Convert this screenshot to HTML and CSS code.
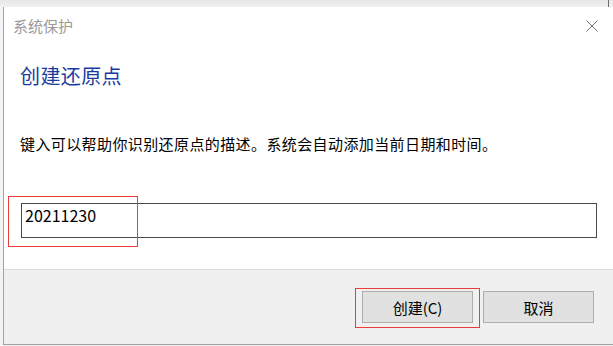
FILE: index.html
```html
<!DOCTYPE html>
<html lang="zh-CN">
<head>
<meta charset="utf-8">
<title>系统保护</title>
<link rel="stylesheet" href="styles.css">
</head>
<body>
<div class="screen">
  <div class="backdrop-strip"><div class="backdrop-edge"></div></div>
  <div class="dialog">
    <div class="main">
      <div class="titlebar">
        <span class="title">系统保护</span>
        <svg class="close" width="12" height="12" viewBox="0 0 12 12" aria-hidden="true">
          <path d="M0.5 0.5 L11.5 11.5 M11.5 0.5 L0.5 11.5" stroke="#707070" stroke-width="1" fill="none"/>
        </svg>
      </div>
      <h1 class="heading">创建还原点</h1>
      <p class="desc">键入可以帮助你识别还原点的描述。系统会自动添加当前日期和时间。</p>
      <div class="field">20211230</div>
    </div>
    <div class="footer">
      <button class="btn">创建(C)</button>
      <button class="btn">取消</button>
    </div>
  </div>
  <div class="mark mark-field"></div>
  <div class="mark mark-button"></div>
</div>
</body>
</html>
```

FILE: styles.css
```css
html, body {
  margin: 0;
  padding: 0;
}
body {
  width: 613px;
  height: 346px;
  overflow: hidden;
  background: #f3f3f3;
  font-family: "Noto Sans CJK SC", "Noto Sans", sans-serif;
}
.screen {
  position: relative;
  width: 613px;
  height: 346px;
}
.backdrop-strip {
  height: 7px;
  background: linear-gradient(#e6e6e6, #f2f2f2);
}
.backdrop-edge {
  height: 7px;
  width: 609px;
  box-sizing: border-box;
  border-right: 1px solid #6a6a6a;
}
.dialog {
  margin-left: 3px;
  border-left: 1px solid #a3a3a3;
  border-bottom: 1px solid #a0a0a0;
  height: 337px;
  display: flex;
  flex-direction: column;
}
.main {
  background: #ffffff;
  height: 262px;
  display: flex;
  flex-direction: column;
}
.titlebar {
  height: 38px;
  display: flex;
  align-items: center;
  justify-content: space-between;
  padding: 0 15px 0 9px;
}
.title {
  font-size: 15px;
  color: #9a9a9a;
  line-height: 20px;
}
.close {
  display: block;
}
.heading {
  margin: 17px 0 0 16px;
  font-size: 20px;
  font-weight: normal;
  line-height: 28px;
  letter-spacing: 0.4px;
  color: #1a3c9f;
}
.desc {
  margin: 44px 0 0 16px;
  font-size: 15px;
  line-height: 20px;
  letter-spacing: 0.4px;
  color: #000000;
}
.field {
  margin: 49px 16px 0 17px;
  height: 35px;
  box-sizing: border-box;
  border: 1px solid #484848;
  padding: 1px 0 0 3px;
  font-size: 16px;
  line-height: 20px;
  color: #000000;
}
.footer {
  flex: 1;
  background: #f0f0f0;
  border-top: 1px solid #dcdcdc;
  display: flex;
  justify-content: flex-end;
  align-items: flex-start;
  gap: 10px;
  padding: 21px 19px 0 0;
}
.btn {
  width: 111px;
  height: 32px;
  background: #e1e1e1;
  border: 1px solid #adadad;
  font-family: "Noto Sans CJK SC", "Noto Sans", sans-serif;
  font-size: 15px;
  color: #000000;
  padding: 0;
  margin: 0;
}
.mark {
  position: absolute;
  box-sizing: border-box;
  border: 1px solid #ec3b3b;
}
.mark-field {
  left: 8px;
  top: 196px;
  width: 130px;
  height: 51px;
}
.mark-button {
  left: 355px;
  top: 288px;
  width: 125px;
  height: 40px;
}
```
